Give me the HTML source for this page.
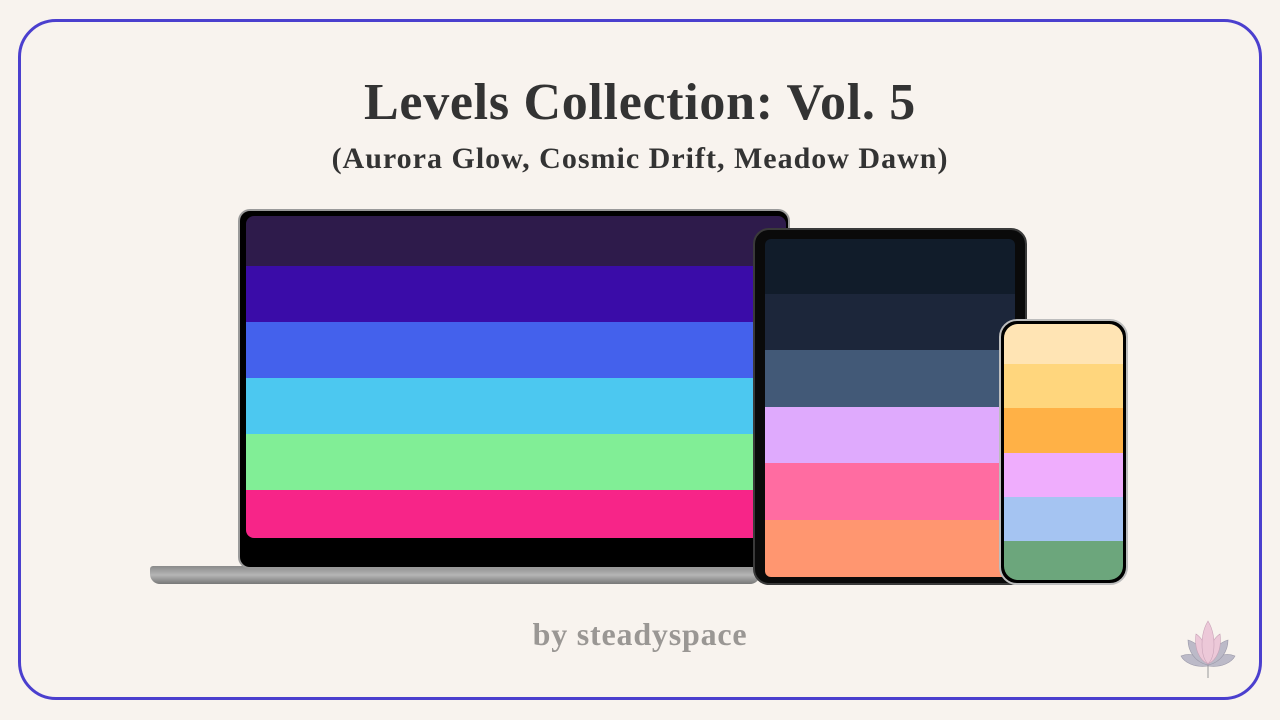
<!DOCTYPE html>
<html><head><style>
body{margin:0;width:1280px;height:720px;background:#f8f3ee;position:relative;overflow:hidden;font-family:"Liberation Serif",serif}
.frame{position:absolute;left:18px;top:19px;width:1238px;height:675px;border:3px solid #4b3fce;border-radius:38px}
.t{position:absolute;left:0;width:1280px;text-align:center;font-weight:bold;color:#333}
.abs{position:absolute}
.bands div{width:100%}
</style></head><body>
<div class="frame"></div>
<div class="t" style="top:73px;font-size:52px;letter-spacing:0.7px">Levels Collection: Vol. 5</div>
<div class="t" style="top:142px;font-size:30px;letter-spacing:1px">(Aurora Glow, Cosmic Drift, Meadow Dawn)</div>
<div class="t" style="top:616px;font-size:32px;letter-spacing:0.8px;color:#9a9794">by steadyspace</div>

<!-- laptop -->
<div class="abs" style="left:150px;top:566px;width:610px;height:18px;background:linear-gradient(#8a8a8a,#b5b5b5 50%,#777);border-radius:3px 3px 10px 10px"></div>
<div class="abs" style="left:238px;top:209px;width:552px;height:360px;background:#000;border:2px solid #9a9a9a;border-radius:12px;box-sizing:border-box"></div>
<div class="abs bands" style="left:246px;top:216px;width:540px;height:322px;border-radius:8px;overflow:hidden">
<div style="height:50px;background:#2e1b4b"></div><div style="height:56px;background:#3a0ca8"></div><div style="height:56px;background:#4461ec"></div><div style="height:56px;background:#4cc8f0"></div><div style="height:56px;background:#81ee96"></div><div style="height:48px;background:#f72588"></div>
</div>

<!-- tablet -->
<div class="abs" style="left:753px;top:228px;width:274px;height:357px;background:#0a0a0a;border:2px solid #3a3a3a;border-radius:16px;box-sizing:border-box"></div>
<div class="abs bands" style="left:765px;top:239px;width:250px;height:338px;border-radius:6px;overflow:hidden">
<div style="height:55px;background:#111c2a"></div><div style="height:56px;background:#1c263a"></div><div style="height:57px;background:#425977"></div><div style="height:56px;background:#dfaafd"></div><div style="height:57px;background:#ff6ca1"></div><div style="height:57px;background:#ff9670"></div>
</div>

<!-- phone -->
<div class="abs" style="left:999px;top:319px;width:129px;height:266px;background:#000;border:2px solid #bdbdbd;border-radius:18px;box-sizing:border-box"></div>
<div class="abs bands" style="left:1004px;top:324px;width:119px;height:256px;border-radius:14px;overflow:hidden">
<div style="height:40px;background:#ffe4b4"></div><div style="height:44px;background:#ffd67d"></div><div style="height:45px;background:#ffb146"></div><div style="height:44px;background:#efadfd"></div><div style="height:44px;background:#a5c4f2"></div><div style="height:39px;background:#6ca67c"></div>
</div>

<!-- lotus -->
<svg class="abs" style="left:1178px;top:618px" width="60" height="62" viewBox="0 0 60 62">
<g fill="#bcbac8" stroke="#9a98a8" stroke-width=".6">
<path d="M30 48 C16 50 6 44 3 38 C13 34 23 38 30 48Z"/>
<path d="M30 48 C44 50 54 44 57 38 C47 34 37 38 30 48Z"/>
<path d="M30 47 C16 44 10 32 10 22 C21 25 28 36 30 47Z"/>
<path d="M30 47 C44 44 50 32 50 22 C39 25 32 36 30 47Z"/>
</g>
<g fill="#ecc8d8" stroke="#c9a3b8" stroke-width=".6">
<path d="M30 46 C21 42 16 30 18 16 C26 21 30 33 30 46Z"/>
<path d="M30 46 C39 42 44 30 42 16 C34 21 30 33 30 46Z"/>
<path d="M30 46 C22 38 22 16 30 3 C38 16 38 38 30 46Z"/>
</g>
<path d="M30 48 L30 60" stroke="#999" stroke-width="1"/>
</svg>
</body></html>
